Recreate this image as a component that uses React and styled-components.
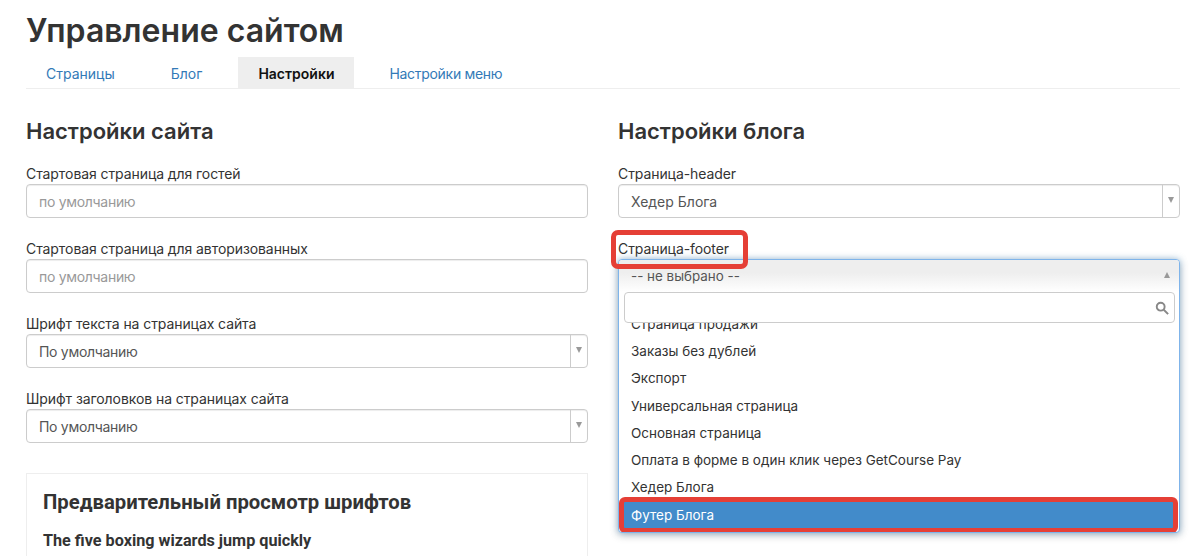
import React from "react";
import styled, { createGlobalStyle } from "styled-components";

const GlobalStyle = createGlobalStyle`
  html, body {
    margin: 0;
    height: 556px;
    overflow: hidden;
    background: #fff;
    font-family: Inter, "Noto Sans", sans-serif;
    color: #333;
  }
  * { box-sizing: border-box; }
`;

const Page = styled.div`
  padding: 11px 20px 0 26px;
  height: 556px;
  overflow: hidden;
`;

const Title = styled.h1`
  margin: 0;
  font-size: 32px;
  line-height: 40px;
  font-weight: 600;
  color: #333;
`;

const Tabs = styled.nav`
  display: flex;
  height: 32px;
  margin-top: 6px;
  border-bottom: 1px solid #eee;
`;

const Tab = styled.a`
  padding: 0 20px;
  margin-right: ${p => p.$gap}px;
  font-size: 14px;
  line-height: 33px;
  letter-spacing: ${p => (p.$tight ? "-0.3px" : "0")};
  color: ${p => (p.$active ? "#111" : "#337ab7")};
  font-weight: ${p => (p.$active ? 600 : 400)};
  background: ${p => (p.$active ? "#eee" : "transparent")};
`;

const Columns = styled.div`
  display: grid;
  grid-template-columns: 562px 562px;
  column-gap: 30px;
  margin-top: 28px;
`;

const Column = styled.section`
  position: relative;
`;

const SectionTitle = styled.h2`
  margin: 0 0 19px;
  font-size: 22px;
  line-height: 28px;
  font-weight: 600;
  color: #333;
`;

const Field = styled.div`
  margin-bottom: 21px;
`;

const Label = styled.label`
  display: block;
  font-size: 14px;
  line-height: 20px;
  letter-spacing: -0.08px;
  color: #333;
`;

const InputBox = styled.div`
  height: 34px;
  padding-left: 12px;
  display: flex;
  align-items: center;
  border: 1px solid #ccc;
  border-radius: 4px;
  font-size: 14px;
  letter-spacing: ${p => (p.$tight ? "-0.3px" : "0")};
  color: ${p => (p.$placeholder ? "#999" : "#555")};
  box-shadow: inset 0 1px 1px rgba(0, 0, 0, 0.075);
`;

const SelectText = styled.span`
  flex: 1;
`;

const Arrow = styled.span`
  width: 17px;
  height: 32px;
  border-left: 1px solid #ccc;
  display: flex;
  align-items: center;
  justify-content: center;
  &::after {
    content: "";
    border-left: 3px solid transparent;
    border-right: 3px solid transparent;
    border-top: 6px solid #999;
    margin-top: -2px;
  }
`;

const Preview = styled.div`
  margin-top: 30px;
  height: 200px;
  padding: 14px 16px;
  border: 1px solid #eee;
  font-family: Roboto, sans-serif;
  color: #333;
`;

const PreviewTitle = styled.h3`
  margin: 0;
  font-size: 20.3px;
  line-height: 28px;
  font-weight: 700;
`;

const PreviewLine = styled.div`
  margin-top: 13px;
  font-size: 16.2px;
  line-height: 24px;
  font-weight: 700;
`;

const LabelMark = styled.div`
  position: absolute;
  left: -7px;
  top: 113px;
  width: 137px;
  height: 39px;
  border: 5px solid #e53f36;
  border-radius: 7px;
  z-index: 3;
`;

const Dropdown = styled.div`
  position: absolute;
  left: 0;
  right: 0;
  top: 142px;
  height: 274px;
  border: 1px solid #7fb4ea;
  border-radius: 4px;
  background: #fff;
  box-shadow: 0 2px 8px rgba(0, 0, 0, 0.25), 0 0 6px rgba(102, 175, 233, 0.5);
  overflow: hidden;
  z-index: 2;
`;

const DropdownHead = styled.div`
  height: 32px;
  padding: 0 9px 0 12px;
  display: flex;
  align-items: center;
  justify-content: space-between;
  font-size: 13.4px;
  color: #555;
  background: linear-gradient(#eee 40%, #fff);
  &::after {
    content: "";
    border-left: 3px solid transparent;
    border-right: 3px solid transparent;
    border-bottom: 6px solid #999;
    margin-top: -3px;
  }
`;

const SearchBox = styled.div`
  height: 31px;
  margin: 0 4px 0 5px;
  padding-right: 5px;
  display: flex;
  align-items: center;
  justify-content: flex-end;
  border: 1px solid #ccc;
  border-radius: 4px;
  background: #fff;
  position: relative;
  z-index: 1;
`;

const SearchIcon = styled.svg`
  width: 14px;
  height: 14px;
  fill: none;
  stroke: #888;
  stroke-width: 2.2;
`;

const Options = styled.ul`
  list-style: none;
  margin: -13px 0 0;
  padding: 0;
`;

const Option = styled.li`
  height: 27.3px;
  padding: 0 12px;
  display: flex;
  align-items: center;
  font-size: 13.5px;
  color: #333;
`;

const SelectedOption = styled(Option)`
  height: 36px;
  margin: -4px 1px 0 0;
  padding: 0 7px;
  border: 5px solid #e53f36;
  border-radius: 6px;
  color: #fff;
  background: #428bca;
`;

const leftFields = [
  { label: "Стартовая страница для гостей", value: "по умолчанию", placeholder: true },
  { label: "Стартовая страница для авторизованных", value: "по умолчанию", placeholder: true },
  { label: "Шрифт текста на страницах сайта", value: "По умолчанию" },
  { label: "Шрифт заголовков на страницах сайта", value: "По умолчанию" }
];

const options = [
  "Страница продажи",
  "Заказы без дублей",
  "Экспорт",
  "Универсальная страница",
  "Основная страница",
  "Оплата в форме в один клик через GetCourse Pay",
  "Хедер Блога"
];

function Select({ value, placeholder, tight }) {
  return (
    <InputBox $placeholder={placeholder} $tight={tight}>
      <SelectText>{value}</SelectText>
      {!placeholder && <Arrow />}
    </InputBox>
  );
}

export default function App() {
  return (
    <Page>
      <GlobalStyle />
      <Title>Управление сайтом</Title>
      <Tabs>
        <Tab $gap={16}>Страницы</Tab>
        <Tab $gap={16}>Блог</Tab>
        <Tab $active $gap={15}>Настройки</Tab>
        <Tab $gap={0} $tight>Настройки меню</Tab>
      </Tabs>
      <Columns>
        <Column>
          <SectionTitle>Настройки сайта</SectionTitle>
          {leftFields.map(f => (
            <Field key={f.label}>
              <Label>{f.label}</Label>
              <Select value={f.value} placeholder={f.placeholder} tight />
            </Field>
          ))}
          <Preview>
            <PreviewTitle>Предварительный просмотр шрифтов</PreviewTitle>
            <PreviewLine>The five boxing wizards jump quickly</PreviewLine>
          </Preview>
        </Column>
        <Column>
          <SectionTitle>Настройки блога</SectionTitle>
          <Field>
            <Label>Страница-header</Label>
            <Select value="Хедер Блога" />
          </Field>
          <Field>
            <Label>Страница-footer</Label>
          </Field>
          <LabelMark />
          <Dropdown>
            <DropdownHead>-- не выбрано --</DropdownHead>
            <SearchBox>
              <SearchIcon viewBox="0 0 16 16">
                <circle cx="6.5" cy="6.5" r="4.5" />
                <path d="M10 10l5 5" />
              </SearchIcon>
            </SearchBox>
            <Options>
              {options.map(o => (
                <Option key={o}>{o}</Option>
              ))}
              <SelectedOption>Футер Блога</SelectedOption>
            </Options>
          </Dropdown>
        </Column>
      </Columns>
    </Page>
  );
}
